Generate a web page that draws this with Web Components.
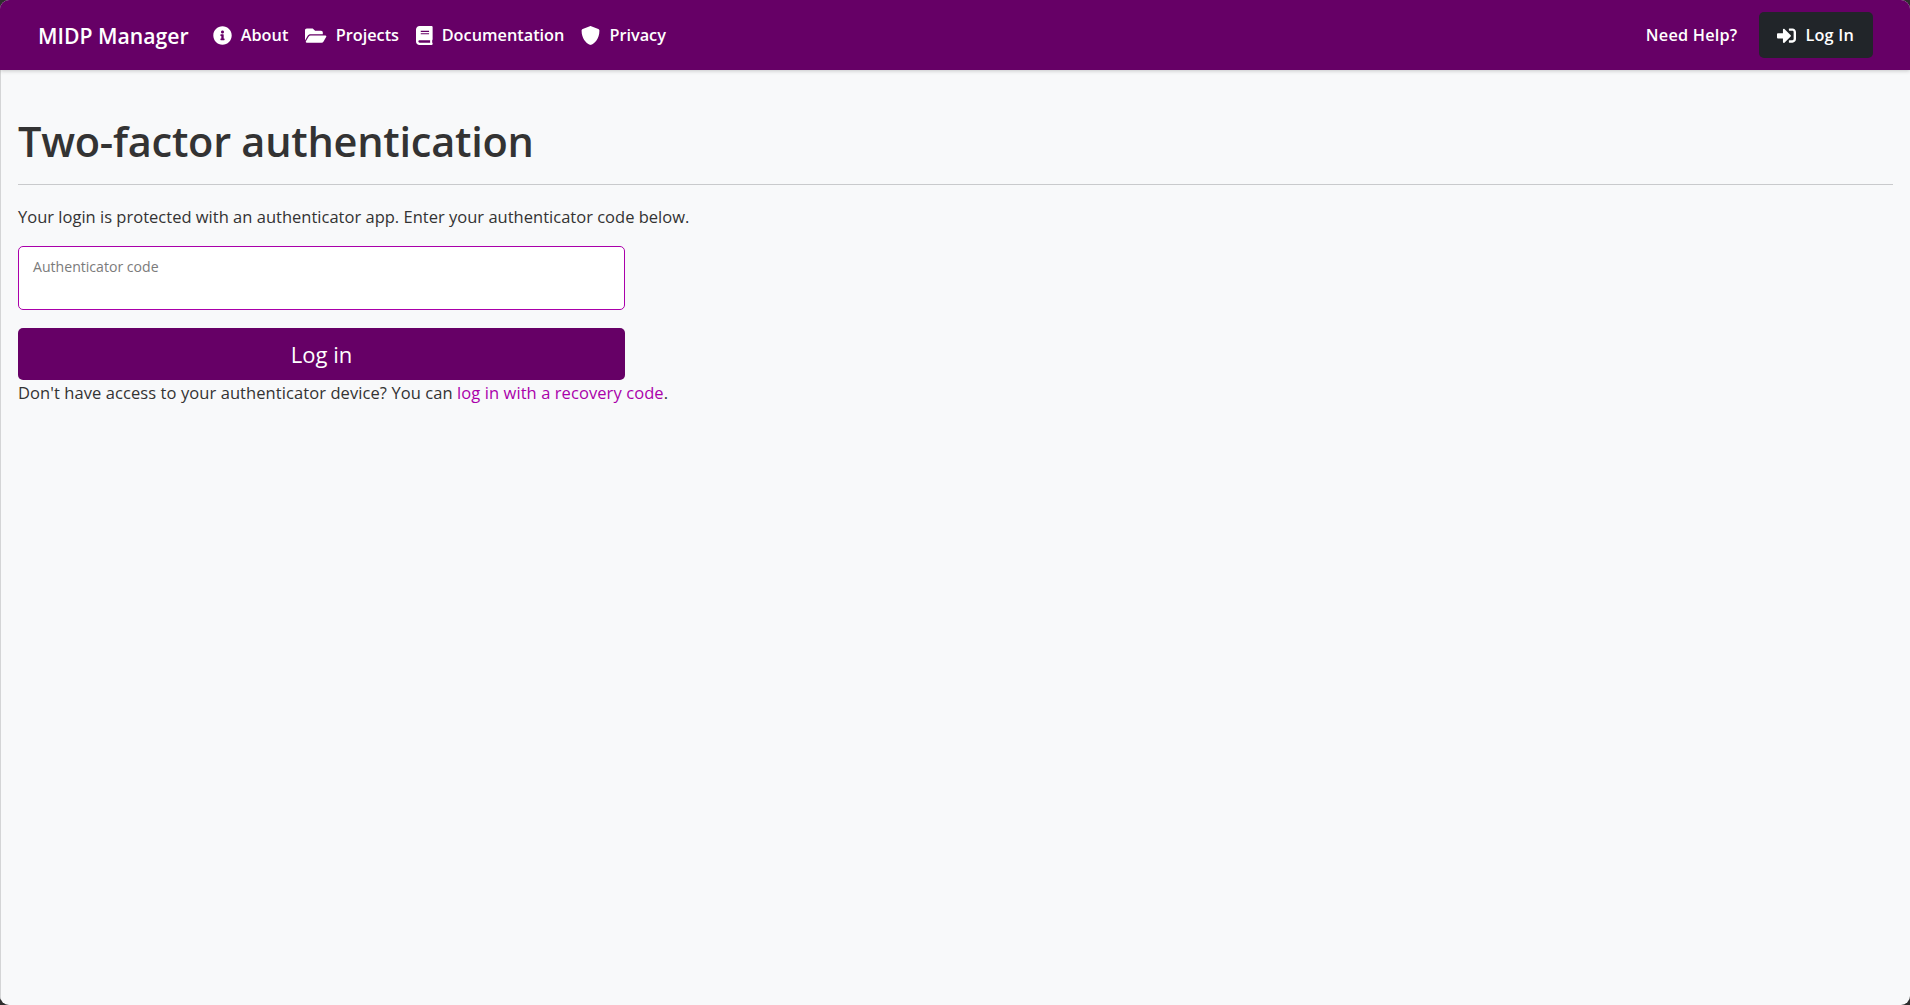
<!DOCTYPE html>
<html lang="en">
<head>
<meta charset="utf-8">
<title>MIDP Manager</title>
<style>
    html, body { margin: 0; height: 100%; background: #2e2e2e; }
    body { font-family: "Open Sans", "Noto Sans", sans-serif; color: #333; }
</style>
</head>
<body>
<app-shell>
    <site-nav></site-nav>
    <two-factor-page></two-factor-page>
</app-shell>

<script>
const ICONS = {
    info: ['0 0 512 512', 'M256 8C119.043 8 8 119.083 8 256c0 136.997 111.043 248 248 248s248-111.003 248-248C504 119.083 392.957 8 256 8zm0 110c23.196 0 42 18.804 42 42s-18.804 42-42 42-42-18.804-42-42 18.804-42 42-42zm56 254c0 6.627-5.373 12-12 12h-88c-6.627 0-12-5.373-12-12v-24c0-6.627 5.373-12 12-12h12v-64h-12c-6.627 0-12-5.373-12-12v-24c0-6.627 5.373-12 12-12h64c6.627 0 12 5.373 12 12v100h12c6.627 0 12 5.373 12 12v24z'],
    folder: ['0 0 576 512', 'M572.694 292.093L500.27 416.248A63.997 63.997 0 0 1 444.989 448H45.025c-18.523 0-30.064-20.093-20.731-36.093l72.424-124.155A64 64 0 0 1 152 256h399.964c18.523 0 30.064 20.093 20.73 36.093zM152 224h328v-48c0-26.51-21.49-48-48-48H272l-64-64H48C21.49 64 0 85.49 0 112v278.046l69.077-118.418C86.214 242.25 117.989 224 152 224z'],
    book: ['0 0 448 512', 'M448 360V24c0-13.3-10.7-24-24-24H96C43 0 0 43 0 96v320c0 53 43 96 96 96h328c13.3 0 24-10.7 24-24v-16c0-7.5-3.5-14.3-8.9-18.7-4.2-15.4-4.2-59.3 0-74.7 5.4-4.3 8.9-11.1 8.9-18.6zM128 134c0-3.3 2.7-6 6-6h212c3.3 0 6 2.7 6 6v20c0 3.3-2.7 6-6 6H134c-3.3 0-6-2.7-6-6v-20zm0 64c0-3.3 2.7-6 6-6h212c3.3 0 6 2.7 6 6v20c0 3.3-2.7 6-6 6H134c-3.3 0-6-2.7-6-6v-20zm253.4 250H96c-17.7 0-32-14.3-32-32 0-17.6 14.4-32 32-32h285.4c-1.9 17.1-1.9 46.9 0 64z'],
    shield: ['0 0 512 512', 'M466.5 83.7l-192-80a48.15 48.15 0 0 0-36.9 0l-192 80C27.7 91.1 16 108.6 16 128c0 198.5 114.5 335.7 221.5 380.3 11.8 4.9 25.1 4.9 36.9 0C360.1 472.6 496 349.3 496 128c0-19.4-11.7-36.9-29.5-44.3z'],
    signin: ['0 0 512 512', 'M416 448h-84c-6.6 0-12-5.4-12-12v-40c0-6.6 5.4-12 12-12h84c17.7 0 32-14.3 32-32V160c0-17.7-14.3-32-32-32h-84c-6.6 0-12-5.4-12-12V76c0-6.6 5.4-12 12-12h84c53 0 96 43 96 96v192c0 53-43 96-96 96zm-47-201L201 79c-15-15-41-4.5-41 17v96H24c-13.3 0-24 10.7-24 24v96c0 13.3 10.7 24 24 24h136v96c0 21.5 26 32 41 17l168-168c9.3-9.4 9.3-24.6 0-34z']
};

class FaIcon extends HTMLElement {
    connectedCallback() {
        const [box, d] = ICONS[this.getAttribute('name')];
        this.attachShadow({mode: "open"}).innerHTML = `
            <style>
                :host { display: inline-flex; align-items: center; }
                svg { height: 19px; width: auto; fill: currentColor; display: block; }
            </style>
            <svg viewBox="${box}" aria-hidden="true"><path d="${d}"/></svg>`;
    }
}

class NavLink extends HTMLElement {
    constructor() {
        super();
        this.attachShadow({mode: "open"}).innerHTML = `
            <style>
                :host {
                    display: inline-flex;
                    align-items: center;
                    gap: 9px;
                    color: #fff;
                    font-size: 16.3px;
                    font-weight: 600;
                    cursor: pointer;
                }
            </style>
            <slot name="icon"></slot><slot></slot>`;
    }
}

class SiteNav extends HTMLElement {
    constructor() {
        super();
        this.attachShadow({mode: "open"}).innerHTML = `
            <style>
                :host {
                    display: flex;
                    align-items: center;
                    height: 70px;
                    padding: 0 37px 0 38px;
                    background: #660066;
                    box-shadow: 0 1px 4px rgba(0, 0, 0, .2);
                    position: relative;
                }
                .brand {
                    color: #fff;
                    font-size: 21.2px;
                    font-weight: 600;
                    margin-right: 24px;
                }
                .links { display: flex; align-items: center; gap: 17px; }
                .right { margin-left: auto; display: flex; align-items: center; gap: 22px; letter-spacing: .2px; }
                .btn {
                    display: inline-flex;
                    align-items: center;
                    height: 46px;
                    padding: 0 19px 0 18px;
                    background: #212529;
                    border-radius: 5px;
                }
            </style>
            <span class="brand">MIDP Manager</span>
            <div class="links">
                <nav-link><fa-icon slot="icon" name="info"></fa-icon>About</nav-link>
                <nav-link><fa-icon slot="icon" name="folder"></fa-icon>Projects</nav-link>
                <nav-link><fa-icon slot="icon" name="book"></fa-icon>Documentation</nav-link>
                <nav-link><fa-icon slot="icon" name="shield"></fa-icon>Privacy</nav-link>
            </div>
            <div class="right">
                <nav-link>Need Help?</nav-link>
                <div class="btn"><nav-link><fa-icon slot="icon" name="signin"></fa-icon>Log In</nav-link></div>
            </div>`;
    }
}

class FloatingField extends HTMLElement {
    constructor() {
        super();
        this.attachShadow({mode: "open"}).innerHTML = `
            <style>
                :host {
                    display: block;
                    box-sizing: border-box;
                    width: 607px;
                    height: 64px;
                    padding: 10px 14px;
                    background: #fff;
                    border: 1px solid #aa00aa;
                    border-radius: 5px;
                    font-size: 14.1px;
                    color: #7b7b7b;
                }
            </style>
            <slot></slot>`;
    }
}

class TwoFactorPage extends HTMLElement {
    constructor() {
        super();
        this.attachShadow({mode: "open"}).innerHTML = `
            <style>
                :host {
                    display: block;
                    flex: 1;
                    padding: 0 17px;
                    border-left: 1px solid #d4d5d6;
                    font-size: 16.5px;
                    color: #333;
                }
                h1 {
                    margin: 0;
                    padding: 44px 0 15px;
                    font-size: 41.5px;
                    font-weight: 600;
                    line-height: 55px;
                    letter-spacing: -0.25px;
                    border-bottom: 1px solid #c9cacc;
                }
                p { margin: 0; line-height: 26px; }
                .intro { margin: 19px 0 16px; letter-spacing: .01px; }
                .submit {
                    display: flex;
                    align-items: center;
                    justify-content: center;
                    width: 607px;
                    height: 52px;
                    margin-top: 18px;
                    background: #660066;
                    border-radius: 5px;
                    color: #fff;
                    font-size: 22px;
                    cursor: pointer;
                }
                .help { letter-spacing: .08px; }
                a { color: #aa00aa; text-decoration: none; }
            </style>
            <h1>Two-factor authentication</h1>
            <p class="intro">Your login is protected with an authenticator app. Enter your authenticator code below.</p>
            <floating-field>Authenticator code</floating-field>
            <div class="submit">Log in</div>
            <p class="help">Don't have access to your authenticator device? You can <a href="#">log in with a recovery code</a>.</p>`;
    }
}

class AppShell extends HTMLElement {
    constructor() {
        super();
        this.attachShadow({mode: "open"}).innerHTML = `
            <style>
                :host {
                    display: flex;
                    flex-direction: column;
                    height: 1005px;
                    background: #f8f9fa;
                    border-radius: 9px;
                    overflow: hidden;
                }
            </style>
            <slot></slot>`;
    }
}

customElements.define("fa-icon", FaIcon);
customElements.define("nav-link", NavLink);
customElements.define("site-nav", SiteNav);
customElements.define("floating-field", FloatingField);
customElements.define("two-factor-page", TwoFactorPage);
customElements.define("app-shell", AppShell);
</script>
</body>
</html>
